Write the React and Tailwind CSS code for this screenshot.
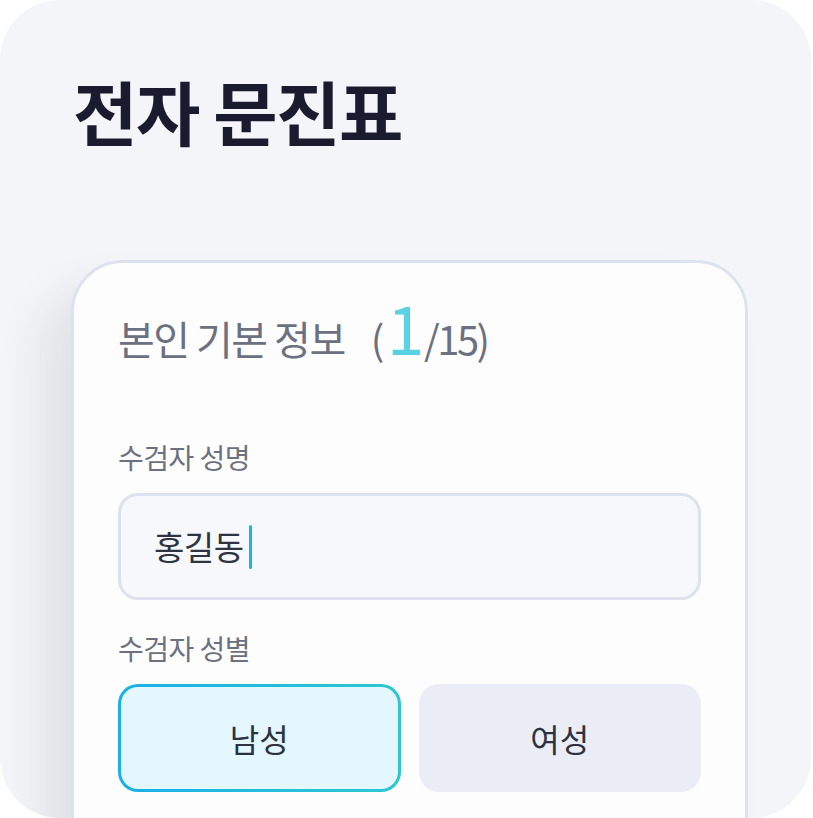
import React from "react";

export default function App() {
  const font = { fontFamily: '"Noto Sans CJK KR", "Noto Sans", sans-serif' };
  return (
    <div className="w-[813px] h-[818px] bg-white" style={font}>
      <div className="w-[811px] h-[818px] rounded-[60px] bg-[#f4f5f8] overflow-hidden flex flex-col">
        <h1 className="ml-[73px] mt-[76px] text-[70px] font-bold leading-none text-[#1a1b2e] tracking-[-1.5px]">
          전자 문진표
        </h1>
        <div className="ml-[71px] mt-[114px] w-[677px] h-[700px] shrink-0 rounded-[52px] border-[3px] border-[#dce3ee] bg-[#fdfdfe] shadow-[-30px_30px_45px_rgba(30,40,70,0.09)] px-[44px] pt-[29px]">
          <div className="flex items-baseline text-[40px] leading-none text-[#6b7180] tracking-[-1.5px]">
            <span>본인 기본 정보</span>
            <span className="ml-[26px]">(</span>
            <span className="text-[68px] text-[#5bd2e4] font-normal ml-[4px] mr-[1px]">1</span>
            <span className="tracking-[-2.5px]">/15)</span>
          </div>
          <div className="mt-[83px] text-[28px] leading-none text-[#6b7180] tracking-[-0.5px]">수검자 성명</div>
          <div className="mt-[22px] h-[107px] rounded-[20px] border-[3px] border-[#dce3ee] bg-[#f6f8fb] flex items-center pl-[33px]">
            <span className="text-[33px] leading-none text-[#2f3441] tracking-[-0.5px]">홍길동</span>
            <span className="ml-[5px] w-[3px] h-[44px] rounded-full bg-[#1ab4e8]" />
          </div>
          <div className="mt-[34px] text-[28px] leading-none text-[#6b7180] tracking-[-0.5px]">수검자 성별</div>
          <div className="mt-[22px] grid grid-cols-2 gap-[18px]">
            <div className="h-[108px] rounded-[20px] p-[3px] bg-gradient-to-r from-[#1ab0ea] to-[#2cc8cf]">
              <div className="w-full h-full rounded-[17px] bg-[#e4f6fe] flex items-center justify-center text-[32px] text-[#2d3240]">
                남성
              </div>
            </div>
            <div className="h-[108px] rounded-[20px] bg-[#eaedf5] flex items-center justify-center text-[32px] text-[#2d3240]">
              여성
            </div>
          </div>
        </div>
      </div>
    </div>
  );
}
